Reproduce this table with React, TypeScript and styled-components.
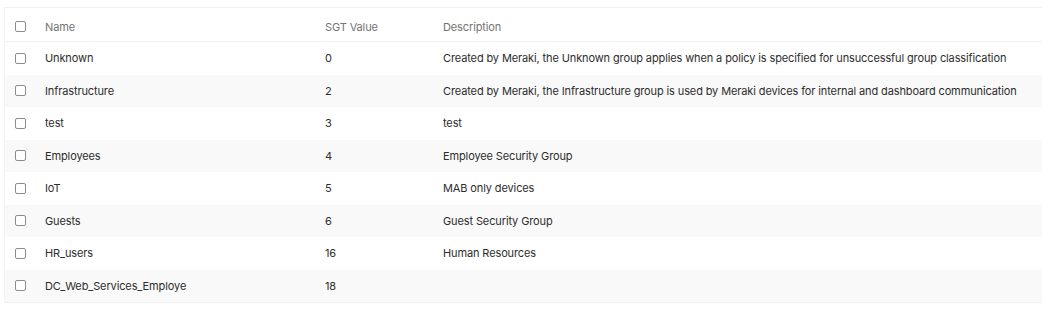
import React from "react";
import styled, { createGlobalStyle } from "styled-components";

type Group = {
  name: string;
  value: number;
  description?: string;
};

const groups: Group[] = [
  {
    name: "Unknown",
    value: 0,
    description:
      "Created by Meraki, the Unknown group applies when a policy is specified for unsuccessful group classification",
  },
  {
    name: "Infrastructure",
    value: 2,
    description:
      "Created by Meraki, the Infrastructure group is used by Meraki devices for internal and dashboard communication",
  },
  { name: "test", value: 3, description: "test" },
  { name: "Employees", value: 4, description: "Employee Security Group" },
  { name: "IoT", value: 5, description: "MAB only devices" },
  { name: "Guests", value: 6, description: "Guest Security Group" },
  { name: "HR_users", value: 16, description: "Human Resources" },
  { name: "DC_Web_Services_Employe", value: 18 },
];

const GlobalStyle = createGlobalStyle`
  body {
    margin: 0;
    background: #ffffff;
    font-family: Inter, "Liberation Sans", sans-serif;
  }
`;

const Page = styled.div`
  padding: 7px 0 0 4px;
`;

const Table = styled.div`
  width: 1038px;
  border-top: 1px solid #f0f0f0;
  border-left: 1px solid #f3f3f3;
  border-bottom: 1px solid #efefef;
`;

const Row = styled.div<{ $striped?: boolean; $header?: boolean }>`
  display: grid;
  grid-template-columns: 40px 280px 118px 1fr;
  align-items: center;
  height: ${(p) => (p.$header ? "34px" : "32.5px")};
  padding-top: ${(p) => (p.$header ? "4px" : "0")};
  box-sizing: border-box;
  background: ${(p) => (p.$striped ? "#f9f9f9" : "#ffffff")};
  border-bottom: ${(p) => (p.$header ? "1px solid #efefef" : "none")};
  font-size: 11px;
  letter-spacing: -0.12px;
  color: ${(p) => (p.$header ? "#747474" : "#2d2d2d")};
`;

const Cell = styled.div`
  white-space: nowrap;
  overflow: hidden;
`;

const CheckCell = styled.div`
  display: flex;
  padding-left: 10px;
`;

const Box = styled.span`
  width: 9px;
  height: 9px;
  border: 1px solid #8c8c8c;
  border-radius: 2px;
  background: #ffffff;
`;

export default function App() {
  return (
    <>
      <GlobalStyle />
      <Page>
        <Table>
          <Row $header>
            <CheckCell>
              <Box />
            </CheckCell>
            <Cell>Name</Cell>
            <Cell>SGT Value</Cell>
            <Cell>Description</Cell>
          </Row>
          {groups.map((g, i) => (
            <Row key={g.name} $striped={i % 2 === 1}>
              <CheckCell>
                <Box />
              </CheckCell>
              <Cell>{g.name}</Cell>
              <Cell>{g.value}</Cell>
              <Cell>{g.description ?? ""}</Cell>
            </Row>
          ))}
        </Table>
      </Page>
    </>
  );
}
